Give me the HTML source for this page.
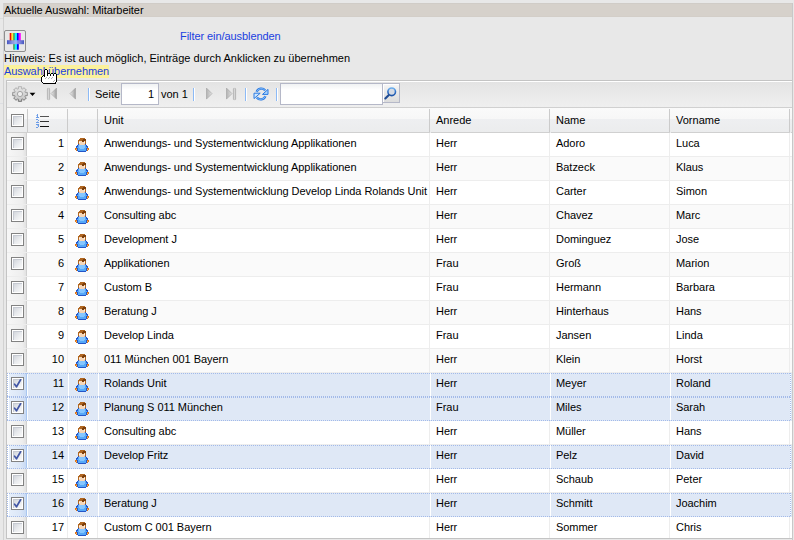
<!DOCTYPE html>
<html><head><meta charset="utf-8">
<style>
*{box-sizing:border-box}
html,body{margin:0;padding:0}
body{width:794px;height:540px;overflow:hidden;position:relative;background:#e8e8e8;font-family:"Liberation Sans",sans-serif;font-size:11px;color:#000}
.a{position:absolute}
.t{position:absolute;white-space:nowrap;line-height:13px;height:13px}
#pl{left:3px;top:3px;width:1px;height:537px;background:#d2d2d2}
#pr{left:792px;top:3px;width:1px;height:537px;background:#c8c8c8}
#hb{left:3px;top:3px;width:790px;height:14px;background:#d6d1cb;border-top:1px solid #d0ccc7;border-bottom:1px solid #d3cec8}
#grid{left:6px;top:80px;width:787px;height:459px;border:1px solid #c4c4c4;background:#fff;overflow:hidden}
#tb{left:0;top:0;width:785px;height:27px;border-bottom:1px solid #d0d0d0;background:linear-gradient(#fff 0,#fff 1px,#e3e3e3 1px,#e6e6e6 20%,#efefef 100%)}
#hd{left:0;top:27px;width:785px;height:25px;background:linear-gradient(#fafafa 0,#f7f7f7 11px,#eeeff1 11px,#ebeced 100%)}
.hc{position:absolute;top:0;height:25px;border-bottom:1px solid #d0d0d0}
.hs{position:absolute;top:1px;width:1px;height:23px;background:#cbcbcb}
.sep{position:absolute;width:1px;height:13px;background:#8cbaf6;top:7px;box-shadow:1px 0 0 #fff}
.row{position:absolute;left:0;width:785px;height:24px;background:#fff;border-bottom:1px solid #ededed}
.row.alt{background:#fafafa}
.row.sel{background:#dfe8f6;border-bottom-color:transparent}
.row.sel::after{content:'';position:absolute;left:0;top:0;width:784px;height:24px;background:repeating-linear-gradient(90deg,#a3bae9 0 1px,transparent 1px 2px) 0 0/100% 1px no-repeat,repeating-linear-gradient(90deg,#a3bae9 0 1px,transparent 1px 2px) 0 23px/100% 1px no-repeat,repeating-linear-gradient(180deg,#a3bae9 0 1px,transparent 1px 2px) 0 0/1px 100% no-repeat,repeating-linear-gradient(180deg,#a3bae9 0 1px,transparent 1px 2px) 783px 0/1px 100% no-repeat}
.row>div{position:absolute;top:0;height:23px}
.row span{position:absolute;top:4px;line-height:13px;white-space:nowrap;letter-spacing:-0.04px}
.c0{left:0;width:20px;background:linear-gradient(90deg,#f7f7f7,#eeeeee 80%,#e2e2e2);border-right:1px solid #d0d0d0}
.sel .c0{background:linear-gradient(90deg,#fff 0,#fff 2px,#e6effb 2px,#dbe6f7 70%,#c8daf4);border-right:1px solid #a8c6f0;box-shadow:1px 0 0 #fbfdff}
.c1{left:20px;width:41px;border-right:1px solid #ededed}
.c1 span{right:3px}
.c2{left:61px;width:30px;border-right:1px solid #ededed}
.c3{left:91px;width:332px;border-right:1px solid #ededed}
.c4{left:423px;width:120px;border-right:1px solid #ededed}
.c5{left:543px;width:120px;border-right:1px solid #ededed}
.c6{left:663px;width:120px;border-right:1px solid #ededed}
.c3 span,.c4 span,.c5 span,.c6 span{left:6px}
.sel .c1,.sel .c2,.sel .c3,.sel .c4,.sel .c5,.sel .c6{border-right-color:transparent;box-shadow:1px 0 0 #fff}
.pi{position:absolute;left:6px;top:3px}
.cb{position:absolute;left:4px;top:4px;width:13px;height:13px;border:1px solid #828282;background:#fff}
.cb i{position:absolute;left:1px;top:1px;width:9px;height:9px;background:linear-gradient(135deg,#cdd1d8,#e9ebee 55%,#f9f9f9);box-shadow:inset 1px 1px 0 #c6cad2}
.cb .ck{position:absolute;left:0;top:0}
</style></head><body>
<svg width="0" height="0" style="position:absolute"><defs>
<linearGradient id="tri" x1="0" x2="1"><stop offset="0" stop-color="#ececec"/><stop offset="1" stop-color="#9c9c9c"/></linearGradient><linearGradient id="tri2" x1="0" x2="1"><stop offset="0" stop-color="#b2b2b2"/><stop offset="1" stop-color="#e2e2e2"/></linearGradient>
<linearGradient id="bar" x1="0" x2="1"><stop offset="0" stop-color="#a4a4a4"/><stop offset=".5" stop-color="#d6d6d6"/><stop offset="1" stop-color="#a0a0a0"/></linearGradient>
<linearGradient id="gear" x1="0" y1="0" x2="0" y2="1"><stop offset="0" stop-color="#e6e6e6"/><stop offset="1" stop-color="#c4c4c4"/></linearGradient>
<linearGradient id="gearst" x1="0" y1="0" x2="0" y2="1"><stop offset="0" stop-color="#b4b4b4"/><stop offset="1" stop-color="#6e6e6e"/></linearGradient>
<linearGradient id="hg" x1="0" x2="1"><stop offset="0" stop-color="#3444bc"/><stop offset=".45" stop-color="#a4acf2"/><stop offset=".55" stop-color="#a4acf2"/><stop offset="1" stop-color="#3444bc"/></linearGradient>
</defs></svg>
<div class="a" id="hb"></div>
<div class="a" id="pl"></div>
<div class="a" style="left:0;top:18px;width:3px;height:1px;background:#dddddd"></div>
<div class="a" style="left:0;top:39px;width:3px;height:1px;background:#dddddd"></div>
<div class="a" style="left:0;top:103px;width:3px;height:1px;background:#dcdee2"></div>
<div class="t" style="left:4px;top:4px;letter-spacing:-0.06px">Aktuelle Auswahl: Mitarbeiter</div>

<div class="a" style="left:4px;top:30px;width:22px;height:22px;border:1px solid #8e8e8e;border-radius:2px;background:#e8e8e8">
<svg class="a" style="left:2px;top:1.8px" width="17" height="17" viewBox="0 0 17 17">
<rect x="2.7" y="0" width="1.7" height="8" fill="#ff0000"/>
<rect x="4.4" y="0" width="1" height="8" fill="#ffb000"/>
<rect x="5.4" y="0" width="1" height="8" fill="#ffff00"/>
<rect x="6.3" y="0" width="1.5" height="16.7" fill="#3d8a3d"/>
<rect x="7.8" y="0" width="2.1" height="16.7" fill="#00ffff"/>
<rect x="9.9" y="0" width="1.9" height="16.7" fill="#0000ff"/>
<rect x="11.8" y="0" width="2" height="8" fill="#ff00ff"/>
<rect x="0" y="7.2" width="17" height="4" fill="url(#hg)" opacity=".9"/>
</svg>
</div>

<div class="t" style="left:180px;top:30px;color:#1a40e0;letter-spacing:-0.07px">Filter ein/ausblenden</div>
<div class="t" style="left:4px;top:52px">Hinweis: Es ist auch möglich, Einträge durch Anklicken zu übernehmen</div>
<div class="a" style="left:4px;top:65px;width:105px;height:13px;background:#fbf19c"></div>
<div class="t" style="left:4px;top:65px;color:#1a40e0;letter-spacing:-0.07px">Auswahl übernehmen</div>

<div class="a" id="grid">
 <div class="a" id="tb">
  <svg class="a" style="left:5px;top:5px" width="16" height="16" viewBox="0 0 16 16">
   <path d="M6.37 2.75 L6.29 0.70 L9.71 0.70 L9.63 2.75 L10.57 3.14 L11.95 1.63 L14.37 4.05 L12.86 5.43 L13.25 6.37 L15.30 6.29 L15.30 9.71 L13.25 9.63 L12.86 10.57 L14.37 11.950 L11.95 14.37 L10.57 12.86 L9.63 13.25 L9.71 15.30 L6.29 15.30 L6.37 13.25 L5.43 12.86 L4.05 14.37 L1.63 11.95 L3.14 10.57 L2.75 9.63 L0.70 9.71 L0.70 6.29 L2.75 6.37 L3.14 5.43 L1.63 4.05 L4.05 1.63 L5.43 3.14Z" fill="url(#gear)" stroke="url(#gearst)" stroke-width="1"/>
   <circle cx="8" cy="8" r="2.6" fill="#eeeeee" stroke="#a4a4a4" stroke-width="1"/>
  </svg>
  <svg class="a" style="left:22px;top:11px" width="7" height="5" viewBox="0 0 7 5"><path d="M0.6 0.8h5.8l-2.9 3.2z" fill="#000"/></svg>
  <svg class="a" style="left:39px;top:6px" width="12" height="14" viewBox="0 0 12 14"><rect x="1.3" y="1.3" width="2.4" height="11.4" rx=".6" fill="url(#bar)" stroke="#b4b4b4" stroke-width=".5"/><path d="M10.5 1.1v11L5 6.6z" fill="url(#tri)" stroke="#a0a0a0" stroke-width=".6"/></svg>
  <svg class="a" style="left:60px;top:6px" width="10" height="14" viewBox="0 0 10 14"><path d="M8.5 1.1v11L3 6.6z" fill="url(#tri)" stroke="#a0a0a0" stroke-width=".6"/></svg>
  <div class="sep" style="left:81px"></div>
  <div class="t" style="left:88px;top:7px">Seite</div>
  <div class="a" style="left:114px;top:2px;width:38px;height:22px;border:1px solid #b5b8c8;background:linear-gradient(#f0f2f3,#fff 6px)"></div>
  <div class="t" style="left:141px;top:7px">1</div>
  <div class="t" style="left:154px;top:7px">von 1</div>
  <div class="sep" style="left:186px"></div>
  <svg class="a" style="left:198px;top:6px" width="10" height="14" viewBox="0 0 10 14"><path d="M1.5 1.1v11L7 6.6z" fill="url(#tri2)" stroke="#a0a0a0" stroke-width=".6"/></svg>
  <svg class="a" style="left:218px;top:6px" width="12" height="14" viewBox="0 0 12 14"><path d="M1.5 1.1v11L7 6.6z" fill="url(#tri2)" stroke="#a0a0a0" stroke-width=".6"/><rect x="8.3" y="1.3" width="2.4" height="11.4" rx=".6" fill="url(#bar)" stroke="#b4b4b4" stroke-width=".5"/></svg>
  <div class="sep" style="left:238px"></div>
  <svg class="a" style="left:246px;top:5px" width="16" height="16" viewBox="0 0 16 16">
   <path d="M3.6 5.9A5 5 0 0 1 12.2 4.4" fill="none" stroke="#2a7ae2" stroke-width="2.3"/>
   <path d="M3.6 5.9A5 5 0 0 1 12.2 4.4" fill="none" stroke="#9fd0ff" stroke-width=".7"/>
   <path d="M15 3.4v5h-5.5z" fill="#a8d4ff" stroke="#2a7ae2" stroke-width="1" stroke-linejoin="round"/>
   <path d="M12.4 10.1A5 5 0 0 1 3.8 11.6" fill="none" stroke="#2a7ae2" stroke-width="2.3"/>
   <path d="M12.4 10.1A5 5 0 0 1 3.8 11.6" fill="none" stroke="#9fd0ff" stroke-width=".7"/>
   <path d="M1 12.6v-5.4h6.2z" fill="#cfe7ff" stroke="#2a7ae2" stroke-width="1" stroke-linejoin="round"/>
  </svg>
  <div class="sep" style="left:269px"></div>
  <div class="a" style="left:273px;top:2px;width:103px;height:22px;border:1px solid #b5b8c8;background:linear-gradient(#f0f2f3,#fff 6px)"></div>
  <div class="a" style="left:376px;top:2px;width:17px;height:20px;border:1px solid #b5b8c8;border-left:0;background:linear-gradient(#f6f6f6,#dcdcdc);box-shadow:inset 1px 1px 0 #fff">
   <svg class="a" style="left:0px;top:1.5px" width="16" height="16" viewBox="0 0 16 16"><defs><linearGradient id="lg" x1="0" y1="0" x2="0" y2="1"><stop offset="0" stop-color="#6fb2f0"/><stop offset=".5" stop-color="#2d6fc8"/><stop offset="1" stop-color="#1f55a8"/></linearGradient></defs><circle cx="8.7" cy="5.8" r="3.8" fill="#d4dae4" stroke="url(#lg)" stroke-width="1.6"/><path d="M5.6 9.2L2.3 12.5" stroke="#1f4b94" stroke-width="2.1" stroke-linecap="round"/></svg>
  </div>
 </div>
 <div class="a" id="hd">
  <div class="hc" style="left:0;width:21px"></div>
  <div class="hs" style="left:20px"></div>
  <div class="a" style="left:4px;top:6px;width:13px;height:13px;border:1px solid #828282;background:#fff"><i style="position:absolute;left:1px;top:1px;width:9px;height:9px;background:linear-gradient(135deg,#cdd1d8,#e9ebee 55%,#f9f9f9);box-shadow:inset 1px 1px 0 #c6cad2"></i></div>
  <div class="hc" style="left:21px;width:41px"></div>
  <svg class="a" style="left:26px;top:6px" width="16" height="14" viewBox="0 0 16 14" shape-rendering="crispEdges"><path fill="#6c9ce6" d="M4 0h1v1h-1zM4 1h1v1h-1zM4 2h1v1h-1zM3 3h3v1h-3zM3 5h2v1h-2zM5 6h1v1h-1zM3 8h3v1h-3zM3 10h3v1h-3zM5 11h1v1h-1zM5 12h1v1h-1zM3 13h2v1h-2z"/><path fill="#a8c4f0" d="M3 1h1v1h-1zM4 7h1v1h-1zM4 11h1v1h-1z"/><path fill="#555555" d="M7 2h9v1h-9z"/><path fill="#333333" d="M7 7h9v1h-9z"/><path fill="#111111" d="M7 12h9v1h-9z"/></svg>
  <div class="hs" style="left:60px"></div>
  <div class="hc" style="left:62px;width:30px"></div>
  <div class="hs" style="left:90px"></div>
  <div class="hc" style="left:92px;width:331px"></div>
  <div class="t" style="left:97px;top:6px">Unit</div>
  <div class="hs" style="left:422px"></div>
  <div class="hc" style="left:424px;width:119px"></div>
  <div class="t" style="left:429px;top:6px">Anrede</div>
  <div class="hs" style="left:542px"></div>
  <div class="hc" style="left:544px;width:119px"></div>
  <div class="t" style="left:549px;top:6px">Name</div>
  <div class="hs" style="left:662px"></div>
  <div class="hc" style="left:664px;width:119px"></div>
  <div class="t" style="left:669px;top:6px">Vorname</div>
  <div class="hs" style="left:782px"></div>
  <div class="hc" style="left:784px;width:3px"></div>
 </div>
 <div class="a" style="left:0;top:52px;width:785px;height:410px">
<div class="row" style="top:0px"><div class="c0"><div class="cb"><i></i></div></div><div class="c1"><span>1</span></div><div class="c2"><svg class="pi" width="16" height="16" viewBox="0 0 16 16" shape-rendering="crispEdges"><path fill="#b06620" d="M6 2h5v1h-5zM5 3h4v1h-4zM4 4h4v1h-4zM4 5h1v1h-1zM11 5h1v1h-1zM4 6h1v1h-1zM11 6h1v1h-1zM4 7h1v1h-1zM11 7h1v1h-1z"/><path fill="#7c3f0c" d="M9 3h3v1h-3zM8 4h4v1h-4zM8 5h2v1h-2z"/><path fill="#f6d6b8" d="M5 5h3v1h-3zM10 5h1v1h-1zM6 6h4v1h-4zM5 7h6v1h-6zM6 8h4v1h-4z"/><path fill="#fff6ee" d="M5 6h1v1h-1zM10 6h1v1h-1z"/><path fill="#2456c8" d="M4 8h1v1h-1zM11 8h1v1h-1zM3 9h1v1h-1zM12 9h1v1h-1zM2 10h2v1h-2zM12 10h2v1h-2zM2 11h1v1h-1zM13 11h1v1h-1zM3 12h1v1h-1zM12 12h1v1h-1zM3 13h1v1h-1zM12 13h1v1h-1zM3 14h1v1h-1zM12 14h1v1h-1zM4 15h8v1h-8z"/><path fill="#eec29e" d="M5 8h1v1h-1zM10 8h1v1h-1z"/><path fill="#56a8f8" d="M4 9h1v1h-1zM11 9h1v1h-1zM4 10h1v1h-1zM11 10h1v1h-1zM3 11h2v1h-2zM11 11h2v1h-2zM4 12h2v1h-2zM10 12h2v1h-2zM4 13h8v1h-8zM4 14h8v1h-8z"/><path fill="#86c6ff" d="M5 9h6v1h-6zM5 10h6v1h-6zM5 11h6v1h-6zM6 12h4v1h-4z"/><path fill="#dc7416" d="M1 12h2v1h-2zM13 12h2v1h-2zM1 13h1v1h-1zM14 13h1v1h-1zM2 14h1v1h-1zM13 14h1v1h-1z"/><path fill="#f6b060" d="M2 13h1v1h-1zM13 13h1v1h-1z"/></svg></div><div class="c3"><span>Anwendungs- und Systementwicklung Applikationen</span></div><div class="c4"><span>Herr</span></div><div class="c5"><span>Adoro</span></div><div class="c6"><span>Luca</span></div></div>
<div class="row alt" style="top:24px"><div class="c0"><div class="cb"><i></i></div></div><div class="c1"><span>2</span></div><div class="c2"><svg class="pi" width="16" height="16" viewBox="0 0 16 16" shape-rendering="crispEdges"><path fill="#b06620" d="M6 2h5v1h-5zM5 3h4v1h-4zM4 4h4v1h-4zM4 5h1v1h-1zM11 5h1v1h-1zM4 6h1v1h-1zM11 6h1v1h-1zM4 7h1v1h-1zM11 7h1v1h-1z"/><path fill="#7c3f0c" d="M9 3h3v1h-3zM8 4h4v1h-4zM8 5h2v1h-2z"/><path fill="#f6d6b8" d="M5 5h3v1h-3zM10 5h1v1h-1zM6 6h4v1h-4zM5 7h6v1h-6zM6 8h4v1h-4z"/><path fill="#fff6ee" d="M5 6h1v1h-1zM10 6h1v1h-1z"/><path fill="#2456c8" d="M4 8h1v1h-1zM11 8h1v1h-1zM3 9h1v1h-1zM12 9h1v1h-1zM2 10h2v1h-2zM12 10h2v1h-2zM2 11h1v1h-1zM13 11h1v1h-1zM3 12h1v1h-1zM12 12h1v1h-1zM3 13h1v1h-1zM12 13h1v1h-1zM3 14h1v1h-1zM12 14h1v1h-1zM4 15h8v1h-8z"/><path fill="#eec29e" d="M5 8h1v1h-1zM10 8h1v1h-1z"/><path fill="#56a8f8" d="M4 9h1v1h-1zM11 9h1v1h-1zM4 10h1v1h-1zM11 10h1v1h-1zM3 11h2v1h-2zM11 11h2v1h-2zM4 12h2v1h-2zM10 12h2v1h-2zM4 13h8v1h-8zM4 14h8v1h-8z"/><path fill="#86c6ff" d="M5 9h6v1h-6zM5 10h6v1h-6zM5 11h6v1h-6zM6 12h4v1h-4z"/><path fill="#dc7416" d="M1 12h2v1h-2zM13 12h2v1h-2zM1 13h1v1h-1zM14 13h1v1h-1zM2 14h1v1h-1zM13 14h1v1h-1z"/><path fill="#f6b060" d="M2 13h1v1h-1zM13 13h1v1h-1z"/></svg></div><div class="c3"><span>Anwendungs- und Systementwicklung Applikationen</span></div><div class="c4"><span>Herr</span></div><div class="c5"><span>Batzeck</span></div><div class="c6"><span>Klaus</span></div></div>
<div class="row" style="top:48px"><div class="c0"><div class="cb"><i></i></div></div><div class="c1"><span>3</span></div><div class="c2"><svg class="pi" width="16" height="16" viewBox="0 0 16 16" shape-rendering="crispEdges"><path fill="#b06620" d="M6 2h5v1h-5zM5 3h4v1h-4zM4 4h4v1h-4zM4 5h1v1h-1zM11 5h1v1h-1zM4 6h1v1h-1zM11 6h1v1h-1zM4 7h1v1h-1zM11 7h1v1h-1z"/><path fill="#7c3f0c" d="M9 3h3v1h-3zM8 4h4v1h-4zM8 5h2v1h-2z"/><path fill="#f6d6b8" d="M5 5h3v1h-3zM10 5h1v1h-1zM6 6h4v1h-4zM5 7h6v1h-6zM6 8h4v1h-4z"/><path fill="#fff6ee" d="M5 6h1v1h-1zM10 6h1v1h-1z"/><path fill="#2456c8" d="M4 8h1v1h-1zM11 8h1v1h-1zM3 9h1v1h-1zM12 9h1v1h-1zM2 10h2v1h-2zM12 10h2v1h-2zM2 11h1v1h-1zM13 11h1v1h-1zM3 12h1v1h-1zM12 12h1v1h-1zM3 13h1v1h-1zM12 13h1v1h-1zM3 14h1v1h-1zM12 14h1v1h-1zM4 15h8v1h-8z"/><path fill="#eec29e" d="M5 8h1v1h-1zM10 8h1v1h-1z"/><path fill="#56a8f8" d="M4 9h1v1h-1zM11 9h1v1h-1zM4 10h1v1h-1zM11 10h1v1h-1zM3 11h2v1h-2zM11 11h2v1h-2zM4 12h2v1h-2zM10 12h2v1h-2zM4 13h8v1h-8zM4 14h8v1h-8z"/><path fill="#86c6ff" d="M5 9h6v1h-6zM5 10h6v1h-6zM5 11h6v1h-6zM6 12h4v1h-4z"/><path fill="#dc7416" d="M1 12h2v1h-2zM13 12h2v1h-2zM1 13h1v1h-1zM14 13h1v1h-1zM2 14h1v1h-1zM13 14h1v1h-1z"/><path fill="#f6b060" d="M2 13h1v1h-1zM13 13h1v1h-1z"/></svg></div><div class="c3"><span>Anwendungs- und Systementwicklung Develop Linda Rolands Unit</span></div><div class="c4"><span>Herr</span></div><div class="c5"><span>Carter</span></div><div class="c6"><span>Simon</span></div></div>
<div class="row alt" style="top:72px"><div class="c0"><div class="cb"><i></i></div></div><div class="c1"><span>4</span></div><div class="c2"><svg class="pi" width="16" height="16" viewBox="0 0 16 16" shape-rendering="crispEdges"><path fill="#b06620" d="M6 2h5v1h-5zM5 3h4v1h-4zM4 4h4v1h-4zM4 5h1v1h-1zM11 5h1v1h-1zM4 6h1v1h-1zM11 6h1v1h-1zM4 7h1v1h-1zM11 7h1v1h-1z"/><path fill="#7c3f0c" d="M9 3h3v1h-3zM8 4h4v1h-4zM8 5h2v1h-2z"/><path fill="#f6d6b8" d="M5 5h3v1h-3zM10 5h1v1h-1zM6 6h4v1h-4zM5 7h6v1h-6zM6 8h4v1h-4z"/><path fill="#fff6ee" d="M5 6h1v1h-1zM10 6h1v1h-1z"/><path fill="#2456c8" d="M4 8h1v1h-1zM11 8h1v1h-1zM3 9h1v1h-1zM12 9h1v1h-1zM2 10h2v1h-2zM12 10h2v1h-2zM2 11h1v1h-1zM13 11h1v1h-1zM3 12h1v1h-1zM12 12h1v1h-1zM3 13h1v1h-1zM12 13h1v1h-1zM3 14h1v1h-1zM12 14h1v1h-1zM4 15h8v1h-8z"/><path fill="#eec29e" d="M5 8h1v1h-1zM10 8h1v1h-1z"/><path fill="#56a8f8" d="M4 9h1v1h-1zM11 9h1v1h-1zM4 10h1v1h-1zM11 10h1v1h-1zM3 11h2v1h-2zM11 11h2v1h-2zM4 12h2v1h-2zM10 12h2v1h-2zM4 13h8v1h-8zM4 14h8v1h-8z"/><path fill="#86c6ff" d="M5 9h6v1h-6zM5 10h6v1h-6zM5 11h6v1h-6zM6 12h4v1h-4z"/><path fill="#dc7416" d="M1 12h2v1h-2zM13 12h2v1h-2zM1 13h1v1h-1zM14 13h1v1h-1zM2 14h1v1h-1zM13 14h1v1h-1z"/><path fill="#f6b060" d="M2 13h1v1h-1zM13 13h1v1h-1z"/></svg></div><div class="c3"><span>Consulting abc</span></div><div class="c4"><span>Herr</span></div><div class="c5"><span>Chavez</span></div><div class="c6"><span>Marc</span></div></div>
<div class="row" style="top:96px"><div class="c0"><div class="cb"><i></i></div></div><div class="c1"><span>5</span></div><div class="c2"><svg class="pi" width="16" height="16" viewBox="0 0 16 16" shape-rendering="crispEdges"><path fill="#b06620" d="M6 2h5v1h-5zM5 3h4v1h-4zM4 4h4v1h-4zM4 5h1v1h-1zM11 5h1v1h-1zM4 6h1v1h-1zM11 6h1v1h-1zM4 7h1v1h-1zM11 7h1v1h-1z"/><path fill="#7c3f0c" d="M9 3h3v1h-3zM8 4h4v1h-4zM8 5h2v1h-2z"/><path fill="#f6d6b8" d="M5 5h3v1h-3zM10 5h1v1h-1zM6 6h4v1h-4zM5 7h6v1h-6zM6 8h4v1h-4z"/><path fill="#fff6ee" d="M5 6h1v1h-1zM10 6h1v1h-1z"/><path fill="#2456c8" d="M4 8h1v1h-1zM11 8h1v1h-1zM3 9h1v1h-1zM12 9h1v1h-1zM2 10h2v1h-2zM12 10h2v1h-2zM2 11h1v1h-1zM13 11h1v1h-1zM3 12h1v1h-1zM12 12h1v1h-1zM3 13h1v1h-1zM12 13h1v1h-1zM3 14h1v1h-1zM12 14h1v1h-1zM4 15h8v1h-8z"/><path fill="#eec29e" d="M5 8h1v1h-1zM10 8h1v1h-1z"/><path fill="#56a8f8" d="M4 9h1v1h-1zM11 9h1v1h-1zM4 10h1v1h-1zM11 10h1v1h-1zM3 11h2v1h-2zM11 11h2v1h-2zM4 12h2v1h-2zM10 12h2v1h-2zM4 13h8v1h-8zM4 14h8v1h-8z"/><path fill="#86c6ff" d="M5 9h6v1h-6zM5 10h6v1h-6zM5 11h6v1h-6zM6 12h4v1h-4z"/><path fill="#dc7416" d="M1 12h2v1h-2zM13 12h2v1h-2zM1 13h1v1h-1zM14 13h1v1h-1zM2 14h1v1h-1zM13 14h1v1h-1z"/><path fill="#f6b060" d="M2 13h1v1h-1zM13 13h1v1h-1z"/></svg></div><div class="c3"><span>Development J</span></div><div class="c4"><span>Herr</span></div><div class="c5"><span>Dominguez</span></div><div class="c6"><span>Jose</span></div></div>
<div class="row alt" style="top:120px"><div class="c0"><div class="cb"><i></i></div></div><div class="c1"><span>6</span></div><div class="c2"><svg class="pi" width="16" height="16" viewBox="0 0 16 16" shape-rendering="crispEdges"><path fill="#b06620" d="M6 2h5v1h-5zM5 3h4v1h-4zM4 4h4v1h-4zM4 5h1v1h-1zM11 5h1v1h-1zM4 6h1v1h-1zM11 6h1v1h-1zM4 7h1v1h-1zM11 7h1v1h-1z"/><path fill="#7c3f0c" d="M9 3h3v1h-3zM8 4h4v1h-4zM8 5h2v1h-2z"/><path fill="#f6d6b8" d="M5 5h3v1h-3zM10 5h1v1h-1zM6 6h4v1h-4zM5 7h6v1h-6zM6 8h4v1h-4z"/><path fill="#fff6ee" d="M5 6h1v1h-1zM10 6h1v1h-1z"/><path fill="#2456c8" d="M4 8h1v1h-1zM11 8h1v1h-1zM3 9h1v1h-1zM12 9h1v1h-1zM2 10h2v1h-2zM12 10h2v1h-2zM2 11h1v1h-1zM13 11h1v1h-1zM3 12h1v1h-1zM12 12h1v1h-1zM3 13h1v1h-1zM12 13h1v1h-1zM3 14h1v1h-1zM12 14h1v1h-1zM4 15h8v1h-8z"/><path fill="#eec29e" d="M5 8h1v1h-1zM10 8h1v1h-1z"/><path fill="#56a8f8" d="M4 9h1v1h-1zM11 9h1v1h-1zM4 10h1v1h-1zM11 10h1v1h-1zM3 11h2v1h-2zM11 11h2v1h-2zM4 12h2v1h-2zM10 12h2v1h-2zM4 13h8v1h-8zM4 14h8v1h-8z"/><path fill="#86c6ff" d="M5 9h6v1h-6zM5 10h6v1h-6zM5 11h6v1h-6zM6 12h4v1h-4z"/><path fill="#dc7416" d="M1 12h2v1h-2zM13 12h2v1h-2zM1 13h1v1h-1zM14 13h1v1h-1zM2 14h1v1h-1zM13 14h1v1h-1z"/><path fill="#f6b060" d="M2 13h1v1h-1zM13 13h1v1h-1z"/></svg></div><div class="c3"><span>Applikationen</span></div><div class="c4"><span>Frau</span></div><div class="c5"><span>Groß</span></div><div class="c6"><span>Marion</span></div></div>
<div class="row" style="top:144px"><div class="c0"><div class="cb"><i></i></div></div><div class="c1"><span>7</span></div><div class="c2"><svg class="pi" width="16" height="16" viewBox="0 0 16 16" shape-rendering="crispEdges"><path fill="#b06620" d="M6 2h5v1h-5zM5 3h4v1h-4zM4 4h4v1h-4zM4 5h1v1h-1zM11 5h1v1h-1zM4 6h1v1h-1zM11 6h1v1h-1zM4 7h1v1h-1zM11 7h1v1h-1z"/><path fill="#7c3f0c" d="M9 3h3v1h-3zM8 4h4v1h-4zM8 5h2v1h-2z"/><path fill="#f6d6b8" d="M5 5h3v1h-3zM10 5h1v1h-1zM6 6h4v1h-4zM5 7h6v1h-6zM6 8h4v1h-4z"/><path fill="#fff6ee" d="M5 6h1v1h-1zM10 6h1v1h-1z"/><path fill="#2456c8" d="M4 8h1v1h-1zM11 8h1v1h-1zM3 9h1v1h-1zM12 9h1v1h-1zM2 10h2v1h-2zM12 10h2v1h-2zM2 11h1v1h-1zM13 11h1v1h-1zM3 12h1v1h-1zM12 12h1v1h-1zM3 13h1v1h-1zM12 13h1v1h-1zM3 14h1v1h-1zM12 14h1v1h-1zM4 15h8v1h-8z"/><path fill="#eec29e" d="M5 8h1v1h-1zM10 8h1v1h-1z"/><path fill="#56a8f8" d="M4 9h1v1h-1zM11 9h1v1h-1zM4 10h1v1h-1zM11 10h1v1h-1zM3 11h2v1h-2zM11 11h2v1h-2zM4 12h2v1h-2zM10 12h2v1h-2zM4 13h8v1h-8zM4 14h8v1h-8z"/><path fill="#86c6ff" d="M5 9h6v1h-6zM5 10h6v1h-6zM5 11h6v1h-6zM6 12h4v1h-4z"/><path fill="#dc7416" d="M1 12h2v1h-2zM13 12h2v1h-2zM1 13h1v1h-1zM14 13h1v1h-1zM2 14h1v1h-1zM13 14h1v1h-1z"/><path fill="#f6b060" d="M2 13h1v1h-1zM13 13h1v1h-1z"/></svg></div><div class="c3"><span>Custom B</span></div><div class="c4"><span>Frau</span></div><div class="c5"><span>Hermann</span></div><div class="c6"><span>Barbara</span></div></div>
<div class="row alt" style="top:168px"><div class="c0"><div class="cb"><i></i></div></div><div class="c1"><span>8</span></div><div class="c2"><svg class="pi" width="16" height="16" viewBox="0 0 16 16" shape-rendering="crispEdges"><path fill="#b06620" d="M6 2h5v1h-5zM5 3h4v1h-4zM4 4h4v1h-4zM4 5h1v1h-1zM11 5h1v1h-1zM4 6h1v1h-1zM11 6h1v1h-1zM4 7h1v1h-1zM11 7h1v1h-1z"/><path fill="#7c3f0c" d="M9 3h3v1h-3zM8 4h4v1h-4zM8 5h2v1h-2z"/><path fill="#f6d6b8" d="M5 5h3v1h-3zM10 5h1v1h-1zM6 6h4v1h-4zM5 7h6v1h-6zM6 8h4v1h-4z"/><path fill="#fff6ee" d="M5 6h1v1h-1zM10 6h1v1h-1z"/><path fill="#2456c8" d="M4 8h1v1h-1zM11 8h1v1h-1zM3 9h1v1h-1zM12 9h1v1h-1zM2 10h2v1h-2zM12 10h2v1h-2zM2 11h1v1h-1zM13 11h1v1h-1zM3 12h1v1h-1zM12 12h1v1h-1zM3 13h1v1h-1zM12 13h1v1h-1zM3 14h1v1h-1zM12 14h1v1h-1zM4 15h8v1h-8z"/><path fill="#eec29e" d="M5 8h1v1h-1zM10 8h1v1h-1z"/><path fill="#56a8f8" d="M4 9h1v1h-1zM11 9h1v1h-1zM4 10h1v1h-1zM11 10h1v1h-1zM3 11h2v1h-2zM11 11h2v1h-2zM4 12h2v1h-2zM10 12h2v1h-2zM4 13h8v1h-8zM4 14h8v1h-8z"/><path fill="#86c6ff" d="M5 9h6v1h-6zM5 10h6v1h-6zM5 11h6v1h-6zM6 12h4v1h-4z"/><path fill="#dc7416" d="M1 12h2v1h-2zM13 12h2v1h-2zM1 13h1v1h-1zM14 13h1v1h-1zM2 14h1v1h-1zM13 14h1v1h-1z"/><path fill="#f6b060" d="M2 13h1v1h-1zM13 13h1v1h-1z"/></svg></div><div class="c3"><span>Beratung J</span></div><div class="c4"><span>Herr</span></div><div class="c5"><span>Hinterhaus</span></div><div class="c6"><span>Hans</span></div></div>
<div class="row" style="top:192px"><div class="c0"><div class="cb"><i></i></div></div><div class="c1"><span>9</span></div><div class="c2"><svg class="pi" width="16" height="16" viewBox="0 0 16 16" shape-rendering="crispEdges"><path fill="#b06620" d="M6 2h5v1h-5zM5 3h4v1h-4zM4 4h4v1h-4zM4 5h1v1h-1zM11 5h1v1h-1zM4 6h1v1h-1zM11 6h1v1h-1zM4 7h1v1h-1zM11 7h1v1h-1z"/><path fill="#7c3f0c" d="M9 3h3v1h-3zM8 4h4v1h-4zM8 5h2v1h-2z"/><path fill="#f6d6b8" d="M5 5h3v1h-3zM10 5h1v1h-1zM6 6h4v1h-4zM5 7h6v1h-6zM6 8h4v1h-4z"/><path fill="#fff6ee" d="M5 6h1v1h-1zM10 6h1v1h-1z"/><path fill="#2456c8" d="M4 8h1v1h-1zM11 8h1v1h-1zM3 9h1v1h-1zM12 9h1v1h-1zM2 10h2v1h-2zM12 10h2v1h-2zM2 11h1v1h-1zM13 11h1v1h-1zM3 12h1v1h-1zM12 12h1v1h-1zM3 13h1v1h-1zM12 13h1v1h-1zM3 14h1v1h-1zM12 14h1v1h-1zM4 15h8v1h-8z"/><path fill="#eec29e" d="M5 8h1v1h-1zM10 8h1v1h-1z"/><path fill="#56a8f8" d="M4 9h1v1h-1zM11 9h1v1h-1zM4 10h1v1h-1zM11 10h1v1h-1zM3 11h2v1h-2zM11 11h2v1h-2zM4 12h2v1h-2zM10 12h2v1h-2zM4 13h8v1h-8zM4 14h8v1h-8z"/><path fill="#86c6ff" d="M5 9h6v1h-6zM5 10h6v1h-6zM5 11h6v1h-6zM6 12h4v1h-4z"/><path fill="#dc7416" d="M1 12h2v1h-2zM13 12h2v1h-2zM1 13h1v1h-1zM14 13h1v1h-1zM2 14h1v1h-1zM13 14h1v1h-1z"/><path fill="#f6b060" d="M2 13h1v1h-1zM13 13h1v1h-1z"/></svg></div><div class="c3"><span>Develop Linda</span></div><div class="c4"><span>Frau</span></div><div class="c5"><span>Jansen</span></div><div class="c6"><span>Linda</span></div></div>
<div class="row alt" style="top:216px"><div class="c0"><div class="cb"><i></i></div></div><div class="c1"><span>10</span></div><div class="c2"><svg class="pi" width="16" height="16" viewBox="0 0 16 16" shape-rendering="crispEdges"><path fill="#b06620" d="M6 2h5v1h-5zM5 3h4v1h-4zM4 4h4v1h-4zM4 5h1v1h-1zM11 5h1v1h-1zM4 6h1v1h-1zM11 6h1v1h-1zM4 7h1v1h-1zM11 7h1v1h-1z"/><path fill="#7c3f0c" d="M9 3h3v1h-3zM8 4h4v1h-4zM8 5h2v1h-2z"/><path fill="#f6d6b8" d="M5 5h3v1h-3zM10 5h1v1h-1zM6 6h4v1h-4zM5 7h6v1h-6zM6 8h4v1h-4z"/><path fill="#fff6ee" d="M5 6h1v1h-1zM10 6h1v1h-1z"/><path fill="#2456c8" d="M4 8h1v1h-1zM11 8h1v1h-1zM3 9h1v1h-1zM12 9h1v1h-1zM2 10h2v1h-2zM12 10h2v1h-2zM2 11h1v1h-1zM13 11h1v1h-1zM3 12h1v1h-1zM12 12h1v1h-1zM3 13h1v1h-1zM12 13h1v1h-1zM3 14h1v1h-1zM12 14h1v1h-1zM4 15h8v1h-8z"/><path fill="#eec29e" d="M5 8h1v1h-1zM10 8h1v1h-1z"/><path fill="#56a8f8" d="M4 9h1v1h-1zM11 9h1v1h-1zM4 10h1v1h-1zM11 10h1v1h-1zM3 11h2v1h-2zM11 11h2v1h-2zM4 12h2v1h-2zM10 12h2v1h-2zM4 13h8v1h-8zM4 14h8v1h-8z"/><path fill="#86c6ff" d="M5 9h6v1h-6zM5 10h6v1h-6zM5 11h6v1h-6zM6 12h4v1h-4z"/><path fill="#dc7416" d="M1 12h2v1h-2zM13 12h2v1h-2zM1 13h1v1h-1zM14 13h1v1h-1zM2 14h1v1h-1zM13 14h1v1h-1z"/><path fill="#f6b060" d="M2 13h1v1h-1zM13 13h1v1h-1z"/></svg></div><div class="c3"><span>011 München 001 Bayern</span></div><div class="c4"><span>Herr</span></div><div class="c5"><span>Klein</span></div><div class="c6"><span>Horst</span></div></div>
<div class="row sel" style="top:240px"><div class="c0"><div class="cb"><i></i><svg class="ck" width="11" height="11" viewBox="0 0 11 11"><path d="M2.6 6.2L4.5 8.8L8.6 1.8" stroke="#4257a6" stroke-width="1.7" fill="none" stroke-linecap="round" stroke-linejoin="round"/></svg></div></div><div class="c1"><span>11</span></div><div class="c2"><svg class="pi" width="16" height="16" viewBox="0 0 16 16" shape-rendering="crispEdges"><path fill="#b06620" d="M6 2h5v1h-5zM5 3h4v1h-4zM4 4h4v1h-4zM4 5h1v1h-1zM11 5h1v1h-1zM4 6h1v1h-1zM11 6h1v1h-1zM4 7h1v1h-1zM11 7h1v1h-1z"/><path fill="#7c3f0c" d="M9 3h3v1h-3zM8 4h4v1h-4zM8 5h2v1h-2z"/><path fill="#f6d6b8" d="M5 5h3v1h-3zM10 5h1v1h-1zM6 6h4v1h-4zM5 7h6v1h-6zM6 8h4v1h-4z"/><path fill="#fff6ee" d="M5 6h1v1h-1zM10 6h1v1h-1z"/><path fill="#2456c8" d="M4 8h1v1h-1zM11 8h1v1h-1zM3 9h1v1h-1zM12 9h1v1h-1zM2 10h2v1h-2zM12 10h2v1h-2zM2 11h1v1h-1zM13 11h1v1h-1zM3 12h1v1h-1zM12 12h1v1h-1zM3 13h1v1h-1zM12 13h1v1h-1zM3 14h1v1h-1zM12 14h1v1h-1zM4 15h8v1h-8z"/><path fill="#eec29e" d="M5 8h1v1h-1zM10 8h1v1h-1z"/><path fill="#56a8f8" d="M4 9h1v1h-1zM11 9h1v1h-1zM4 10h1v1h-1zM11 10h1v1h-1zM3 11h2v1h-2zM11 11h2v1h-2zM4 12h2v1h-2zM10 12h2v1h-2zM4 13h8v1h-8zM4 14h8v1h-8z"/><path fill="#86c6ff" d="M5 9h6v1h-6zM5 10h6v1h-6zM5 11h6v1h-6zM6 12h4v1h-4z"/><path fill="#dc7416" d="M1 12h2v1h-2zM13 12h2v1h-2zM1 13h1v1h-1zM14 13h1v1h-1zM2 14h1v1h-1zM13 14h1v1h-1z"/><path fill="#f6b060" d="M2 13h1v1h-1zM13 13h1v1h-1z"/></svg></div><div class="c3"><span>Rolands Unit</span></div><div class="c4"><span>Herr</span></div><div class="c5"><span>Meyer</span></div><div class="c6"><span>Roland</span></div></div>
<div class="row alt sel" style="top:264px"><div class="c0"><div class="cb"><i></i><svg class="ck" width="11" height="11" viewBox="0 0 11 11"><path d="M2.6 6.2L4.5 8.8L8.6 1.8" stroke="#4257a6" stroke-width="1.7" fill="none" stroke-linecap="round" stroke-linejoin="round"/></svg></div></div><div class="c1"><span>12</span></div><div class="c2"><svg class="pi" width="16" height="16" viewBox="0 0 16 16" shape-rendering="crispEdges"><path fill="#b06620" d="M6 2h5v1h-5zM5 3h4v1h-4zM4 4h4v1h-4zM4 5h1v1h-1zM11 5h1v1h-1zM4 6h1v1h-1zM11 6h1v1h-1zM4 7h1v1h-1zM11 7h1v1h-1z"/><path fill="#7c3f0c" d="M9 3h3v1h-3zM8 4h4v1h-4zM8 5h2v1h-2z"/><path fill="#f6d6b8" d="M5 5h3v1h-3zM10 5h1v1h-1zM6 6h4v1h-4zM5 7h6v1h-6zM6 8h4v1h-4z"/><path fill="#fff6ee" d="M5 6h1v1h-1zM10 6h1v1h-1z"/><path fill="#2456c8" d="M4 8h1v1h-1zM11 8h1v1h-1zM3 9h1v1h-1zM12 9h1v1h-1zM2 10h2v1h-2zM12 10h2v1h-2zM2 11h1v1h-1zM13 11h1v1h-1zM3 12h1v1h-1zM12 12h1v1h-1zM3 13h1v1h-1zM12 13h1v1h-1zM3 14h1v1h-1zM12 14h1v1h-1zM4 15h8v1h-8z"/><path fill="#eec29e" d="M5 8h1v1h-1zM10 8h1v1h-1z"/><path fill="#56a8f8" d="M4 9h1v1h-1zM11 9h1v1h-1zM4 10h1v1h-1zM11 10h1v1h-1zM3 11h2v1h-2zM11 11h2v1h-2zM4 12h2v1h-2zM10 12h2v1h-2zM4 13h8v1h-8zM4 14h8v1h-8z"/><path fill="#86c6ff" d="M5 9h6v1h-6zM5 10h6v1h-6zM5 11h6v1h-6zM6 12h4v1h-4z"/><path fill="#dc7416" d="M1 12h2v1h-2zM13 12h2v1h-2zM1 13h1v1h-1zM14 13h1v1h-1zM2 14h1v1h-1zM13 14h1v1h-1z"/><path fill="#f6b060" d="M2 13h1v1h-1zM13 13h1v1h-1z"/></svg></div><div class="c3"><span>Planung S 011 München</span></div><div class="c4"><span>Frau</span></div><div class="c5"><span>Miles</span></div><div class="c6"><span>Sarah</span></div></div>
<div class="row" style="top:288px"><div class="c0"><div class="cb"><i></i></div></div><div class="c1"><span>13</span></div><div class="c2"><svg class="pi" width="16" height="16" viewBox="0 0 16 16" shape-rendering="crispEdges"><path fill="#b06620" d="M6 2h5v1h-5zM5 3h4v1h-4zM4 4h4v1h-4zM4 5h1v1h-1zM11 5h1v1h-1zM4 6h1v1h-1zM11 6h1v1h-1zM4 7h1v1h-1zM11 7h1v1h-1z"/><path fill="#7c3f0c" d="M9 3h3v1h-3zM8 4h4v1h-4zM8 5h2v1h-2z"/><path fill="#f6d6b8" d="M5 5h3v1h-3zM10 5h1v1h-1zM6 6h4v1h-4zM5 7h6v1h-6zM6 8h4v1h-4z"/><path fill="#fff6ee" d="M5 6h1v1h-1zM10 6h1v1h-1z"/><path fill="#2456c8" d="M4 8h1v1h-1zM11 8h1v1h-1zM3 9h1v1h-1zM12 9h1v1h-1zM2 10h2v1h-2zM12 10h2v1h-2zM2 11h1v1h-1zM13 11h1v1h-1zM3 12h1v1h-1zM12 12h1v1h-1zM3 13h1v1h-1zM12 13h1v1h-1zM3 14h1v1h-1zM12 14h1v1h-1zM4 15h8v1h-8z"/><path fill="#eec29e" d="M5 8h1v1h-1zM10 8h1v1h-1z"/><path fill="#56a8f8" d="M4 9h1v1h-1zM11 9h1v1h-1zM4 10h1v1h-1zM11 10h1v1h-1zM3 11h2v1h-2zM11 11h2v1h-2zM4 12h2v1h-2zM10 12h2v1h-2zM4 13h8v1h-8zM4 14h8v1h-8z"/><path fill="#86c6ff" d="M5 9h6v1h-6zM5 10h6v1h-6zM5 11h6v1h-6zM6 12h4v1h-4z"/><path fill="#dc7416" d="M1 12h2v1h-2zM13 12h2v1h-2zM1 13h1v1h-1zM14 13h1v1h-1zM2 14h1v1h-1zM13 14h1v1h-1z"/><path fill="#f6b060" d="M2 13h1v1h-1zM13 13h1v1h-1z"/></svg></div><div class="c3"><span>Consulting abc</span></div><div class="c4"><span>Herr</span></div><div class="c5"><span>Müller</span></div><div class="c6"><span>Hans</span></div></div>
<div class="row alt sel" style="top:312px"><div class="c0"><div class="cb"><i></i><svg class="ck" width="11" height="11" viewBox="0 0 11 11"><path d="M2.6 6.2L4.5 8.8L8.6 1.8" stroke="#4257a6" stroke-width="1.7" fill="none" stroke-linecap="round" stroke-linejoin="round"/></svg></div></div><div class="c1"><span>14</span></div><div class="c2"><svg class="pi" width="16" height="16" viewBox="0 0 16 16" shape-rendering="crispEdges"><path fill="#b06620" d="M6 2h5v1h-5zM5 3h4v1h-4zM4 4h4v1h-4zM4 5h1v1h-1zM11 5h1v1h-1zM4 6h1v1h-1zM11 6h1v1h-1zM4 7h1v1h-1zM11 7h1v1h-1z"/><path fill="#7c3f0c" d="M9 3h3v1h-3zM8 4h4v1h-4zM8 5h2v1h-2z"/><path fill="#f6d6b8" d="M5 5h3v1h-3zM10 5h1v1h-1zM6 6h4v1h-4zM5 7h6v1h-6zM6 8h4v1h-4z"/><path fill="#fff6ee" d="M5 6h1v1h-1zM10 6h1v1h-1z"/><path fill="#2456c8" d="M4 8h1v1h-1zM11 8h1v1h-1zM3 9h1v1h-1zM12 9h1v1h-1zM2 10h2v1h-2zM12 10h2v1h-2zM2 11h1v1h-1zM13 11h1v1h-1zM3 12h1v1h-1zM12 12h1v1h-1zM3 13h1v1h-1zM12 13h1v1h-1zM3 14h1v1h-1zM12 14h1v1h-1zM4 15h8v1h-8z"/><path fill="#eec29e" d="M5 8h1v1h-1zM10 8h1v1h-1z"/><path fill="#56a8f8" d="M4 9h1v1h-1zM11 9h1v1h-1zM4 10h1v1h-1zM11 10h1v1h-1zM3 11h2v1h-2zM11 11h2v1h-2zM4 12h2v1h-2zM10 12h2v1h-2zM4 13h8v1h-8zM4 14h8v1h-8z"/><path fill="#86c6ff" d="M5 9h6v1h-6zM5 10h6v1h-6zM5 11h6v1h-6zM6 12h4v1h-4z"/><path fill="#dc7416" d="M1 12h2v1h-2zM13 12h2v1h-2zM1 13h1v1h-1zM14 13h1v1h-1zM2 14h1v1h-1zM13 14h1v1h-1z"/><path fill="#f6b060" d="M2 13h1v1h-1zM13 13h1v1h-1z"/></svg></div><div class="c3"><span>Develop Fritz</span></div><div class="c4"><span>Herr</span></div><div class="c5"><span>Pelz</span></div><div class="c6"><span>David</span></div></div>
<div class="row" style="top:336px"><div class="c0"><div class="cb"><i></i></div></div><div class="c1"><span>15</span></div><div class="c2"><svg class="pi" width="16" height="16" viewBox="0 0 16 16" shape-rendering="crispEdges"><path fill="#b06620" d="M6 2h5v1h-5zM5 3h4v1h-4zM4 4h4v1h-4zM4 5h1v1h-1zM11 5h1v1h-1zM4 6h1v1h-1zM11 6h1v1h-1zM4 7h1v1h-1zM11 7h1v1h-1z"/><path fill="#7c3f0c" d="M9 3h3v1h-3zM8 4h4v1h-4zM8 5h2v1h-2z"/><path fill="#f6d6b8" d="M5 5h3v1h-3zM10 5h1v1h-1zM6 6h4v1h-4zM5 7h6v1h-6zM6 8h4v1h-4z"/><path fill="#fff6ee" d="M5 6h1v1h-1zM10 6h1v1h-1z"/><path fill="#2456c8" d="M4 8h1v1h-1zM11 8h1v1h-1zM3 9h1v1h-1zM12 9h1v1h-1zM2 10h2v1h-2zM12 10h2v1h-2zM2 11h1v1h-1zM13 11h1v1h-1zM3 12h1v1h-1zM12 12h1v1h-1zM3 13h1v1h-1zM12 13h1v1h-1zM3 14h1v1h-1zM12 14h1v1h-1zM4 15h8v1h-8z"/><path fill="#eec29e" d="M5 8h1v1h-1zM10 8h1v1h-1z"/><path fill="#56a8f8" d="M4 9h1v1h-1zM11 9h1v1h-1zM4 10h1v1h-1zM11 10h1v1h-1zM3 11h2v1h-2zM11 11h2v1h-2zM4 12h2v1h-2zM10 12h2v1h-2zM4 13h8v1h-8zM4 14h8v1h-8z"/><path fill="#86c6ff" d="M5 9h6v1h-6zM5 10h6v1h-6zM5 11h6v1h-6zM6 12h4v1h-4z"/><path fill="#dc7416" d="M1 12h2v1h-2zM13 12h2v1h-2zM1 13h1v1h-1zM14 13h1v1h-1zM2 14h1v1h-1zM13 14h1v1h-1z"/><path fill="#f6b060" d="M2 13h1v1h-1zM13 13h1v1h-1z"/></svg></div><div class="c3"></div><div class="c4"><span>Herr</span></div><div class="c5"><span>Schaub</span></div><div class="c6"><span>Peter</span></div></div>
<div class="row alt sel" style="top:360px"><div class="c0"><div class="cb"><i></i><svg class="ck" width="11" height="11" viewBox="0 0 11 11"><path d="M2.6 6.2L4.5 8.8L8.6 1.8" stroke="#4257a6" stroke-width="1.7" fill="none" stroke-linecap="round" stroke-linejoin="round"/></svg></div></div><div class="c1"><span>16</span></div><div class="c2"><svg class="pi" width="16" height="16" viewBox="0 0 16 16" shape-rendering="crispEdges"><path fill="#b06620" d="M6 2h5v1h-5zM5 3h4v1h-4zM4 4h4v1h-4zM4 5h1v1h-1zM11 5h1v1h-1zM4 6h1v1h-1zM11 6h1v1h-1zM4 7h1v1h-1zM11 7h1v1h-1z"/><path fill="#7c3f0c" d="M9 3h3v1h-3zM8 4h4v1h-4zM8 5h2v1h-2z"/><path fill="#f6d6b8" d="M5 5h3v1h-3zM10 5h1v1h-1zM6 6h4v1h-4zM5 7h6v1h-6zM6 8h4v1h-4z"/><path fill="#fff6ee" d="M5 6h1v1h-1zM10 6h1v1h-1z"/><path fill="#2456c8" d="M4 8h1v1h-1zM11 8h1v1h-1zM3 9h1v1h-1zM12 9h1v1h-1zM2 10h2v1h-2zM12 10h2v1h-2zM2 11h1v1h-1zM13 11h1v1h-1zM3 12h1v1h-1zM12 12h1v1h-1zM3 13h1v1h-1zM12 13h1v1h-1zM3 14h1v1h-1zM12 14h1v1h-1zM4 15h8v1h-8z"/><path fill="#eec29e" d="M5 8h1v1h-1zM10 8h1v1h-1z"/><path fill="#56a8f8" d="M4 9h1v1h-1zM11 9h1v1h-1zM4 10h1v1h-1zM11 10h1v1h-1zM3 11h2v1h-2zM11 11h2v1h-2zM4 12h2v1h-2zM10 12h2v1h-2zM4 13h8v1h-8zM4 14h8v1h-8z"/><path fill="#86c6ff" d="M5 9h6v1h-6zM5 10h6v1h-6zM5 11h6v1h-6zM6 12h4v1h-4z"/><path fill="#dc7416" d="M1 12h2v1h-2zM13 12h2v1h-2zM1 13h1v1h-1zM14 13h1v1h-1zM2 14h1v1h-1zM13 14h1v1h-1z"/><path fill="#f6b060" d="M2 13h1v1h-1zM13 13h1v1h-1z"/></svg></div><div class="c3"><span>Beratung J</span></div><div class="c4"><span>Herr</span></div><div class="c5"><span>Schmitt</span></div><div class="c6"><span>Joachim</span></div></div>
<div class="row" style="top:384px"><div class="c0"><div class="cb"><i></i></div></div><div class="c1"><span>17</span></div><div class="c2"><svg class="pi" width="16" height="16" viewBox="0 0 16 16" shape-rendering="crispEdges"><path fill="#b06620" d="M6 2h5v1h-5zM5 3h4v1h-4zM4 4h4v1h-4zM4 5h1v1h-1zM11 5h1v1h-1zM4 6h1v1h-1zM11 6h1v1h-1zM4 7h1v1h-1zM11 7h1v1h-1z"/><path fill="#7c3f0c" d="M9 3h3v1h-3zM8 4h4v1h-4zM8 5h2v1h-2z"/><path fill="#f6d6b8" d="M5 5h3v1h-3zM10 5h1v1h-1zM6 6h4v1h-4zM5 7h6v1h-6zM6 8h4v1h-4z"/><path fill="#fff6ee" d="M5 6h1v1h-1zM10 6h1v1h-1z"/><path fill="#2456c8" d="M4 8h1v1h-1zM11 8h1v1h-1zM3 9h1v1h-1zM12 9h1v1h-1zM2 10h2v1h-2zM12 10h2v1h-2zM2 11h1v1h-1zM13 11h1v1h-1zM3 12h1v1h-1zM12 12h1v1h-1zM3 13h1v1h-1zM12 13h1v1h-1zM3 14h1v1h-1zM12 14h1v1h-1zM4 15h8v1h-8z"/><path fill="#eec29e" d="M5 8h1v1h-1zM10 8h1v1h-1z"/><path fill="#56a8f8" d="M4 9h1v1h-1zM11 9h1v1h-1zM4 10h1v1h-1zM11 10h1v1h-1zM3 11h2v1h-2zM11 11h2v1h-2zM4 12h2v1h-2zM10 12h2v1h-2zM4 13h8v1h-8zM4 14h8v1h-8z"/><path fill="#86c6ff" d="M5 9h6v1h-6zM5 10h6v1h-6zM5 11h6v1h-6zM6 12h4v1h-4z"/><path fill="#dc7416" d="M1 12h2v1h-2zM13 12h2v1h-2zM1 13h1v1h-1zM14 13h1v1h-1zM2 14h1v1h-1zM13 14h1v1h-1z"/><path fill="#f6b060" d="M2 13h1v1h-1zM13 13h1v1h-1z"/></svg></div><div class="c3"><span>Custom C 001 Bayern</span></div><div class="c4"><span>Herr</span></div><div class="c5"><span>Sommer</span></div><div class="c6"><span>Chris</span></div></div>
 </div>
</div>
<div class="a" id="pr"></div>
<svg class="a" style="left:40px;top:68px" width="17" height="16" viewBox="0 0 17 16" shape-rendering="crispEdges"><path fill="#000" d="M5 1h2v1h-2zM4 2h1v1h-1zM7 2h1v1h-1zM4 3h1v1h-1zM7 3h1v1h-1zM4 4h1v1h-1zM7 4h1v1h-1zM4 5h1v1h-1zM7 5h3v1h-3zM11 5h2v1h-2zM14 5h2v1h-2zM4 6h1v1h-1zM7 6h1v1h-1zM10 6h1v1h-1zM13 6h1v1h-1zM16 6h1v1h-1zM3 7h2v1h-2zM7 7h1v1h-1zM10 7h1v1h-1zM13 7h1v1h-1zM16 7h1v1h-1zM2 8h1v1h-1zM4 8h1v1h-1zM16 8h1v1h-1zM1 9h1v1h-1zM16 9h1v1h-1zM1 10h1v1h-1zM16 10h1v1h-1zM1 11h1v1h-1zM16 11h1v1h-1zM1 12h1v1h-1zM16 12h1v1h-1zM1 13h1v1h-1zM16 13h1v1h-1zM2 14h1v1h-1zM15 14h1v1h-1zM3 15h13v1h-13z"/><path fill="#fff" d="M5 2h2v1h-2zM5 3h2v1h-2zM5 4h2v1h-2zM5 5h2v1h-2zM5 6h2v1h-2zM8 6h2v1h-2zM11 6h2v1h-2zM14 6h2v1h-2zM5 7h2v1h-2zM8 7h2v1h-2zM11 7h2v1h-2zM14 7h2v1h-2zM3 8h1v1h-1zM5 8h11v1h-11zM2 9h4v1h-4zM7 9h2v1h-2zM10 9h2v1h-2zM13 9h3v1h-3zM2 10h3v1h-3zM6 10h2v1h-2zM9 10h2v1h-2zM12 10h4v1h-4zM2 11h14v1h-14zM2 12h12v1h-12zM15 12h1v1h-1zM2 13h11v1h-11zM14 13h2v1h-2zM3 14h12v1h-12z"/><path fill="#b0b0b0" d="M6 9h1v1h-1zM9 9h1v1h-1zM12 9h1v1h-1zM5 10h1v1h-1zM8 10h1v1h-1zM11 10h1v1h-1zM14 12h1v1h-1zM13 13h1v1h-1z"/></svg>
</body></html>
